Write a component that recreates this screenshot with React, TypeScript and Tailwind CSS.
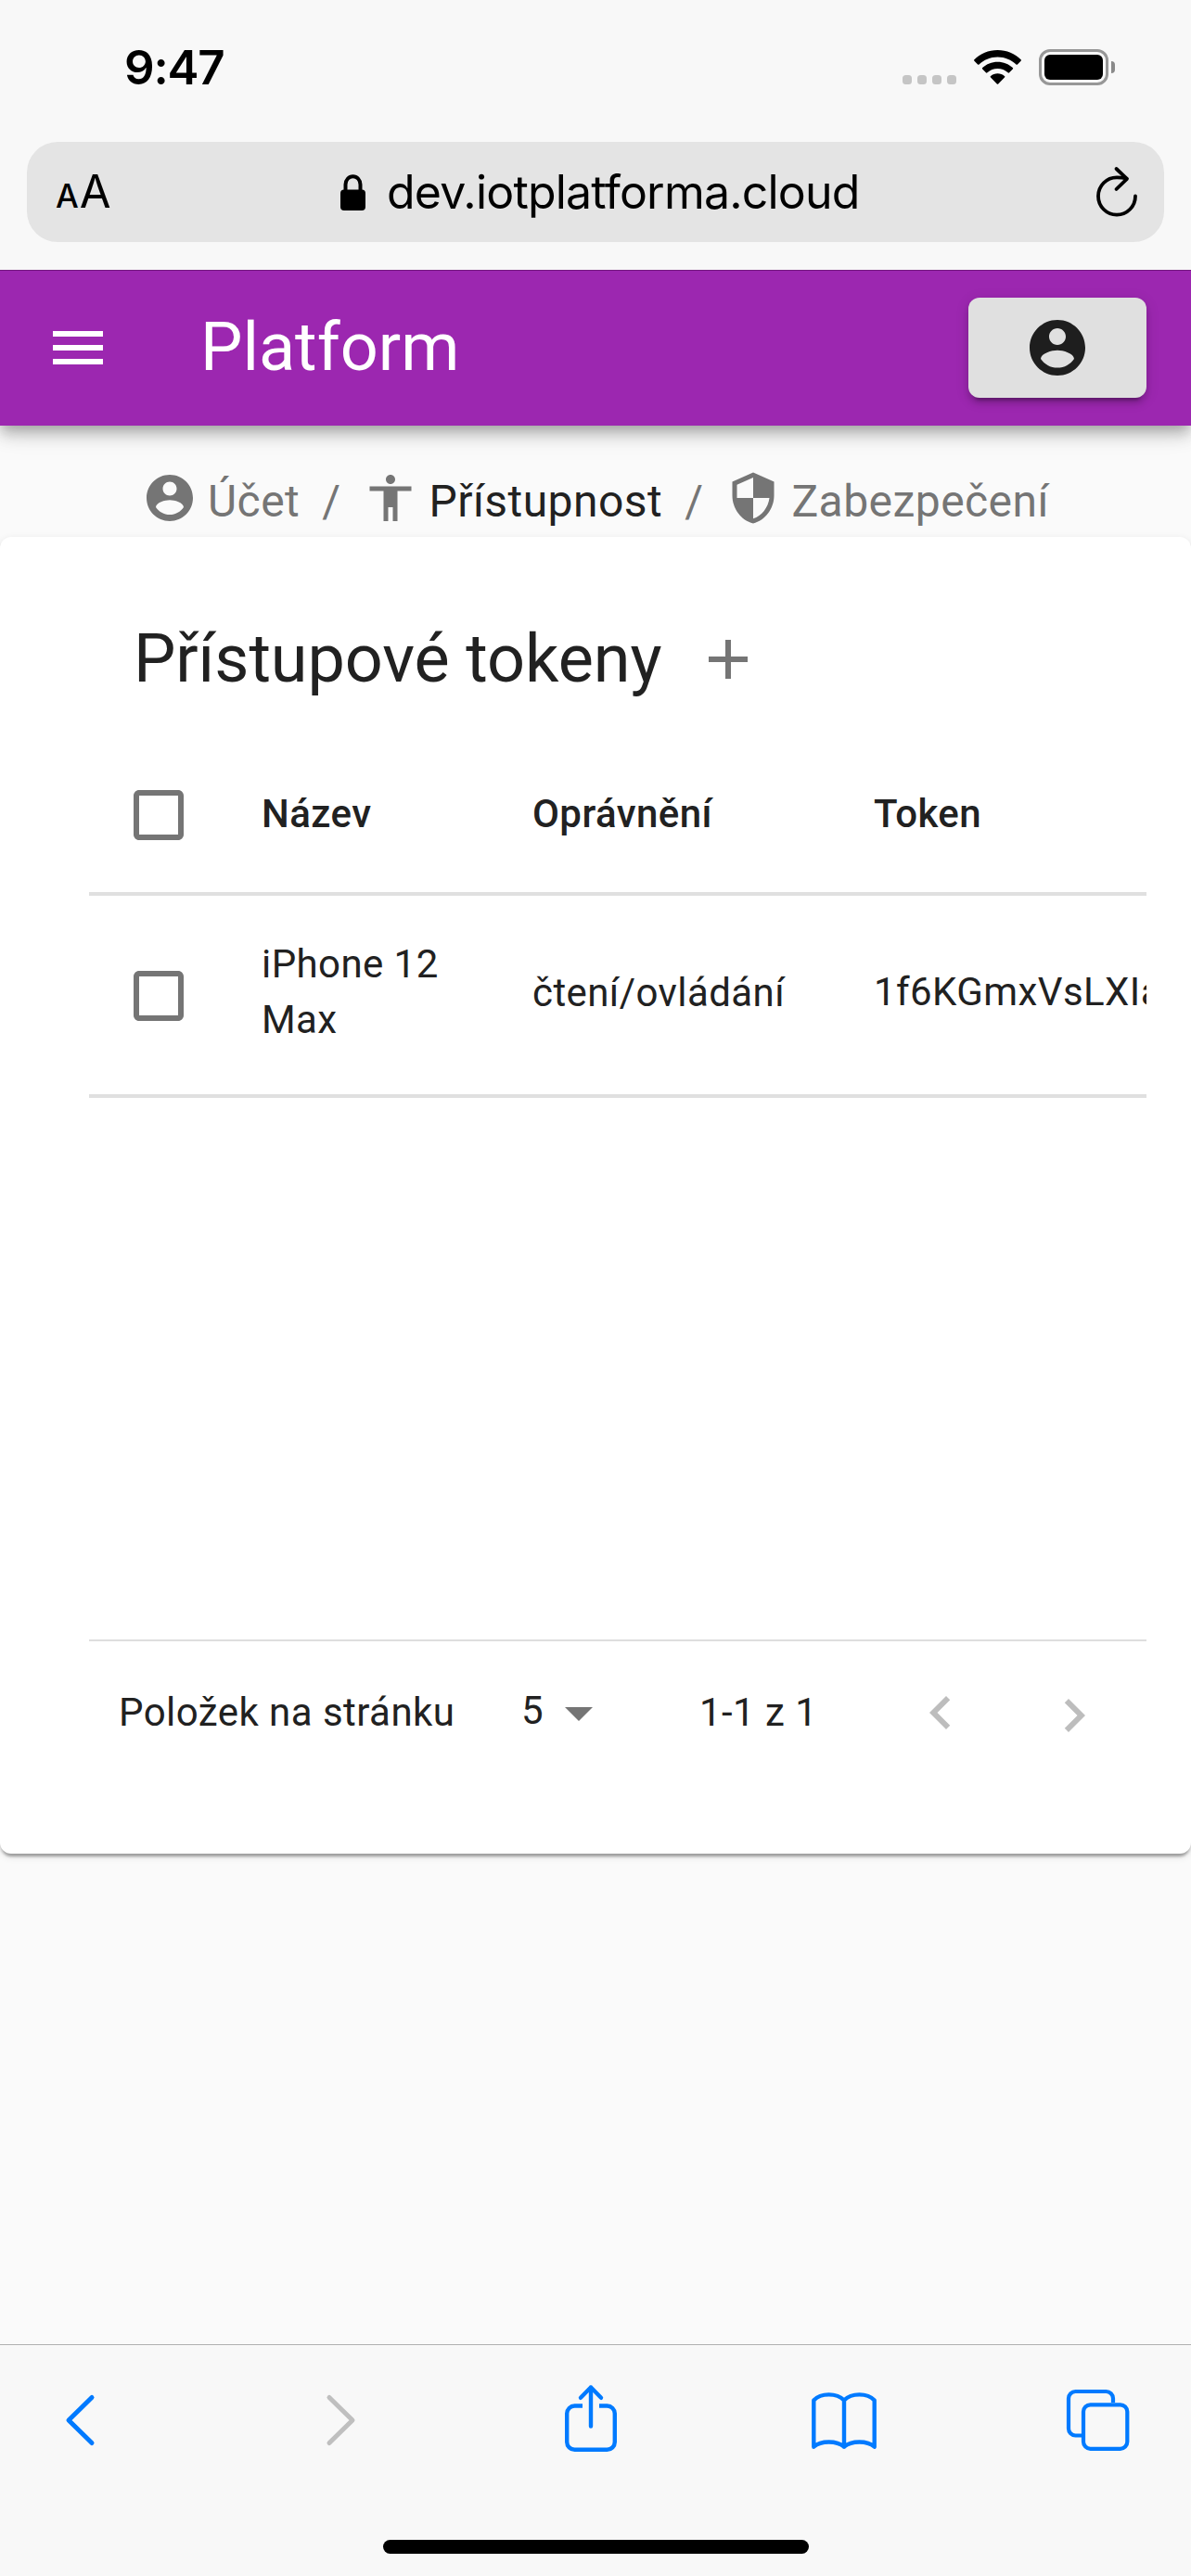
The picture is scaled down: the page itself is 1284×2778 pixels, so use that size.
import type { ReactNode } from "react";

const ACCOUNT =
  "M12 2C6.48 2 2 6.48 2 12s4.48 10 10 10 10-4.48 10-10S17.52 2 12 2zm0 3c1.66 0 3 1.34 3 3s-1.34 3-3 3-3-1.34-3-3 1.34-3 3-3zm0 14.2c-2.5 0-4.71-1.28-6-3.22.03-1.99 4-3.08 6-3.08 1.99 0 5.97 1.09 6 3.08-1.29 1.94-3.5 3.22-6 3.22z";
const ACCESSIBILITY =
  "M12 2c1.1 0 2 .9 2 2s-.9 2-2 2-2-.9-2-2 .9-2 2-2zm9 7h-6v13h-2v-6h-2v6H9V9H3V7h18v2z";
const SECURITY =
  "M12 1L3 5v6c0 5.55 3.84 10.74 9 12 5.16-1.26 9-6.45 9-12V5l-9-4zm0 10.99h7c-.53 4.12-3.28 7.79-7 8.94V12H5V6.3l7-3.11v8.8z";
const MENU = "M3 18h18v-2H3v2zm0-5h18v-2H3v2zm0-7v2h18V6H3z";
const ADD = "M19 13h-6v6h-2v-6H5v-2h6V5h2v6h6v2z";
const CHECKBOX =
  "M19 5v14H5V5h14m0-2H5c-1.1 0-2 .9-2 2v14c0 1.1.9 2 2 2h14c1.1 0 2-.9 2-2V5c0-1.1-.9-2-2-2z";
const DROPDOWN = "M7 10l5 5 5-5z";
const CHEVRON_LEFT = "M15.41 7.41L14 6l-6 6 6 6 1.41-1.41L10.83 12z";
const CHEVRON_RIGHT = "M10 6L8.59 7.41 13.17 12l-4.58 4.59L10 18l6-6z";

function Icon({ d, className }: { d: string; className: string }) {
  return (
    <svg viewBox="0 0 24 24" fill="currentColor" className={`shrink-0 ${className}`}>
      <path d={d} />
    </svg>
  );
}

function StatusBar() {
  return (
    <div className="flex h-[145px] items-center pr-[82px] pl-[134px]">
      <div className="text-[51px] leading-[60px] font-semibold tracking-[-1.2px]">9:47</div>
      <div className="ml-auto flex h-[37px] items-end gap-[6px] text-[#c5c5c5]">
        <span className="size-[10px] rounded-[3.5px] bg-current" />
        <span className="size-[10px] rounded-[3.5px] bg-current" />
        <span className="size-[10px] rounded-[3.5px] bg-current" />
        <span className="size-[10px] rounded-[3.5px] bg-current" />
      </div>
      <svg viewBox="0 0 51 37" className="ml-[19px] h-[37px] w-[51px]">
        <path d="M25.5 0C35.3 0 44.300 3.800 50.600 10.300a1 1 0 0 1 0 1.400L46.900 15.400a1 1 0 0 1-1.400 0C40.400 10.400 33.300 7.400 25.500 7.400S10.600 10.400 5.500 15.400a1 1 0 0 1-1.400 0L.400 11.700a1 1 0 0 1 0-1.400C6.700 3.800 15.700 0 25.500 0z" />
        <path d="M25.500 12.700c6.300 0 12 2.400 16.300 6.400a1 1 0 0 1 0 1.500l-3.700 3.700a1.100 1.100 0 0 1-1.500 0 16.200 16.200 0 0 0-22.200 0 1.100 1.100 0 0 1-1.500 0l-3.700-3.700a1 1 0 0 1 0-1.500c4.300-4 10-6.400 16.300-6.400z" />
        <path d="M25.500 25.300c2.800 0 5.400 1 7.400 2.700a1 1 0 0 1 .1 1.500l-6.800 6.900a1 1 0 0 1-1.400 0L18 29.500a1 1 0 0 1 .1-1.500c2-1.700 4.600-2.700 7.400-2.700z" />
      </svg>
      <div className="ml-[19px] flex h-[39px] w-[75px] rounded-[12px] border-[3px] border-[#979797] p-[3px]">
        <div className="flex-1 rounded-[6px] bg-black" />
      </div>
      <div className="ml-[3px] h-[13px] w-[4px] rounded-r-full bg-[#8a8a8a]" />
    </div>
  );
}

function AddressBar() {
  return (
    <div className="mx-[29px] mt-[8px] flex h-[108px] items-center rounded-[33px] bg-[#e4e4e4] text-black">
      <div className="flex w-[90px] items-baseline pt-[4px] pl-[31px] leading-[60px]">
        <span className="text-[35px] font-medium">A</span>
        <span className="ml-[1px] text-[49px]">A</span>
      </div>
      <svg viewBox="0 0 27 39" className="ml-[248px] h-[39px] w-[27px]">
        <path d="M5.500 19V11a8 8.800 0 0 1 16 0v8" fill="none" stroke="#000" strokeWidth="4" />
        <rect x="0" y="16.500" width="27" height="22.500" rx="4" />
      </svg>
      <div className="ml-[23px] text-[50px] leading-[60px] tracking-[-0.8px] whitespace-nowrap">
        dev.iotplatforma.cloud
      </div>
      <svg
        viewBox="0 0 46 56"
        className="mr-[28px] ml-auto h-[56px] w-[46px]"
        fill="none"
        stroke="#000"
        strokeWidth="3.8"
        strokeLinecap="round"
        strokeLinejoin="round"
      >
        <path d="M43 32.500A20 20.200 0 1 1 23 12.300Q28.500 12.300 33.500 13.500" />
        <path d="M22.500 3L34 13.800L22.500 25" />
      </svg>
    </div>
  );
}

function AppBar() {
  return (
    <header className="relative z-10 flex h-[168px] items-center border-t border-[#73167f] bg-[#9c27b0] pr-[48px] pb-px pl-[48px] shadow-[0_6px_12px_-3px_rgba(0,0,0,0.2),0_12px_15px_0_rgba(0,0,0,0.14),0_3px_30px_0_rgba(0,0,0,0.12)]">
      <Icon d={MENU} className="size-[72px] text-white" />
      <h1 className="ml-[96px] text-[72px] leading-[96px] font-normal text-white">Platform</h1>
      <button className="ml-auto flex h-[108px] w-[192px] items-center justify-center rounded-[12px] bg-[#e0e0e0] text-[#1e1e1e] shadow-[0_9px_3px_-6px_rgba(0,0,0,0.2),0_6px_6px_0_rgba(0,0,0,0.14),0_3px_15px_0_rgba(0,0,0,0.12)]">
        <Icon d={ACCOUNT} className="size-[72px]" />
      </button>
    </header>
  );
}

function Crumb({ d, label, active }: { d: string; label: string; active?: boolean }) {
  return (
    <div className="flex items-center">
      <Icon d={d} className="mb-[8px] size-[60px] text-[#757575]" />
      <span className={active ? "ml-[11px] text-[#212121]" : "ml-[11px] text-[#757575]"}>{label}</span>
    </div>
  );
}

function Breadcrumbs() {
  return (
    <nav className="flex h-[120px] items-start pt-[46px] pl-[153px] text-[48px] leading-[72px] tracking-[0.45px] text-[#757575]">
      <Crumb d={ACCOUNT} label="Účet" />
      <span className="mx-[24px]">/</span>
      <Crumb d={ACCESSIBILITY} label="Přístupnost" active />
      <span className="mx-[24px]">/</span>
      <Crumb d={SECURITY} label="Zabezpečení" />
    </nav>
  );
}

function Row({ head, children }: { head?: boolean; children: ReactNode }) {
  return (
    <div
      className={
        head
          ? "grid h-[172px] grid-cols-[186px_292px_368px_auto] items-center border-b-4 border-[#e0e0e0] font-medium"
          : "grid h-[218px] grid-cols-[186px_292px_368px_auto] items-center border-b-4 border-[#e0e0e0]"
      }
    >
      {children}
    </div>
  );
}

function TokensCard() {
  return (
    <section className="flex h-[1420px] flex-col rounded-[12px] bg-white pr-[48px] pl-[96px] text-[#212121] shadow-[0_6px_3px_-3px_rgba(0,0,0,0.2),0_3px_3px_0_rgba(0,0,0,0.14),0_3px_9px_0_rgba(0,0,0,0.12)]">
      <div className="flex h-[215px] items-center pt-[48px] pl-[48px]">
        <h2 className="text-[72px] leading-[96px] font-normal tracking-[-0.1px]">Přístupové tokeny</h2>
        <Icon d={ADD} className="mt-px ml-[36px] size-[72px] text-[#757575]" />
      </div>
      <div className="overflow-hidden text-[42px] leading-[60px] tracking-[0.42px]">
        <Row head>
          <Icon d={CHECKBOX} className="mt-[2px] ml-[39px] size-[72px] text-[#757575]" />
          <span>Název</span>
          <span>Oprávnění</span>
          <span>Token</span>
        </Row>
        <Row>
          <Icon d={CHECKBOX} className="mt-[2px] ml-[39px] size-[72px] text-[#757575]" />
          <span className="w-[200px] pb-[6px]">iPhone 12 Max</span>
          <span className="pb-[5px]">čtení/ovládání</span>
          <span className="pb-[7px] whitespace-nowrap">1f6KGmxVsLXIa</span>
        </Row>
      </div>
      <div className="mt-auto flex h-[231px] items-start border-t-2 border-[#dedede] pl-[32px] text-[42px] leading-[60px] tracking-[0.45px]">
        <div className="flex h-[153px] items-center">
          <span className="w-[434px]">Položek na stránku</span>
          <span className="w-[26px] pb-[4px]">5</span>
          <Icon d={DROPDOWN} className="size-[72px] text-[#757575]" />
          <span className="ml-[94px] w-[224px]">1-1 z 1</span>
          <Icon d={CHEVRON_LEFT} className="size-[72px] text-[#bdbdbd]" />
          <Icon d={CHEVRON_RIGHT} className="mt-[7px] ml-[72px] size-[72px] text-[#bdbdbd]" />
        </div>
      </div>
    </section>
  );
}

function Toolbar() {
  return (
    <footer className="flex h-[250px] flex-col items-center border-t border-[#b0b0b0] bg-[#f8f8f8]">
      <div className="flex h-[160px] w-full items-start pt-[41px] text-[#007aff]">
        <svg viewBox="0 0 36 76" className="ml-[68px] h-[76px] w-[36px]" fill="none" stroke="currentColor" strokeWidth="5" strokeLinecap="round" strokeLinejoin="round">
          <path d="M31 15.500L6 40L31 64.500" />
        </svg>
        <svg viewBox="0 0 36 76" className="ml-[246px] h-[76px] w-[36px] text-[#bfbfbf]" fill="none" stroke="currentColor" strokeWidth="5" strokeLinecap="round" strokeLinejoin="round">
          <path d="M5 15.500L30 40L5 64.500" />
        </svg>
        <svg viewBox="0 0 60 76" className="ml-[221px] h-[76px] w-[60px]" fill="none" stroke="currentColor" strokeWidth="4.4" strokeLinejoin="round">
          <path d="M21 24.500H12.500A8.300 8.300 0 0 0 4.200 32.800V63.500A8.300 8.300 0 0 0 12.500 71.800H47.500A8.300 8.300 0 0 0 55.800 63.500V32.800A8.300 8.300 0 0 0 47.500 24.500H39" />
          <path d="M30 46.500V4.500M19 15.800L30 4.500L41 15.800" strokeLinecap="round" />
        </svg>
        <svg viewBox="0 0 74 76" className="ml-[206px] h-[76px] w-[74px]" fill="none" stroke="currentColor" strokeWidth="4.400" strokeLinecap="round" strokeLinejoin="round">
          <path d="M37 18.500C29 10.300 12 10.300 4.300 18.500V68.700C12 61.800 29 61.800 37 68.700C45 61.800 62 61.800 69.700 68.700V18.500C62 10.300 45 10.300 37 18.500V68.700" />
        </svg>
        <svg viewBox="0 0 72 76" className="ml-[201px] h-[76px] w-[72px]" fill="none" stroke="currentColor" strokeWidth="4.200">
          <path d="M52 21V16.500a7.500 7.500 0 0 0-7.500-7.500H11.500A7.500 7.500 0 0 0 4 16.500V49a7.500 7.500 0 0 0 7.500 7.500H18" />
          <rect x="20" y="23.300" width="47.300" height="47.500" rx="7.500" />
        </svg>
      </div>
      <div className="mt-[50px] h-[15px] w-[459px] rounded-full bg-black" />
    </footer>
  );
}

export default function App() {
  return (
    <div className="flex h-[2778px] w-[1284px] flex-col overflow-hidden bg-[#fafafa] font-['Roboto',sans-serif]">
      <div className="relative z-20 h-[291px] shrink-0 bg-[#f8f8f8] font-['Inter',sans-serif] text-black">
        <StatusBar />
        <AddressBar />
      </div>
      <AppBar />
      <main className="flex-1">
        <Breadcrumbs />
        <TokensCard />
      </main>
      <Toolbar />
    </div>
  );
}
